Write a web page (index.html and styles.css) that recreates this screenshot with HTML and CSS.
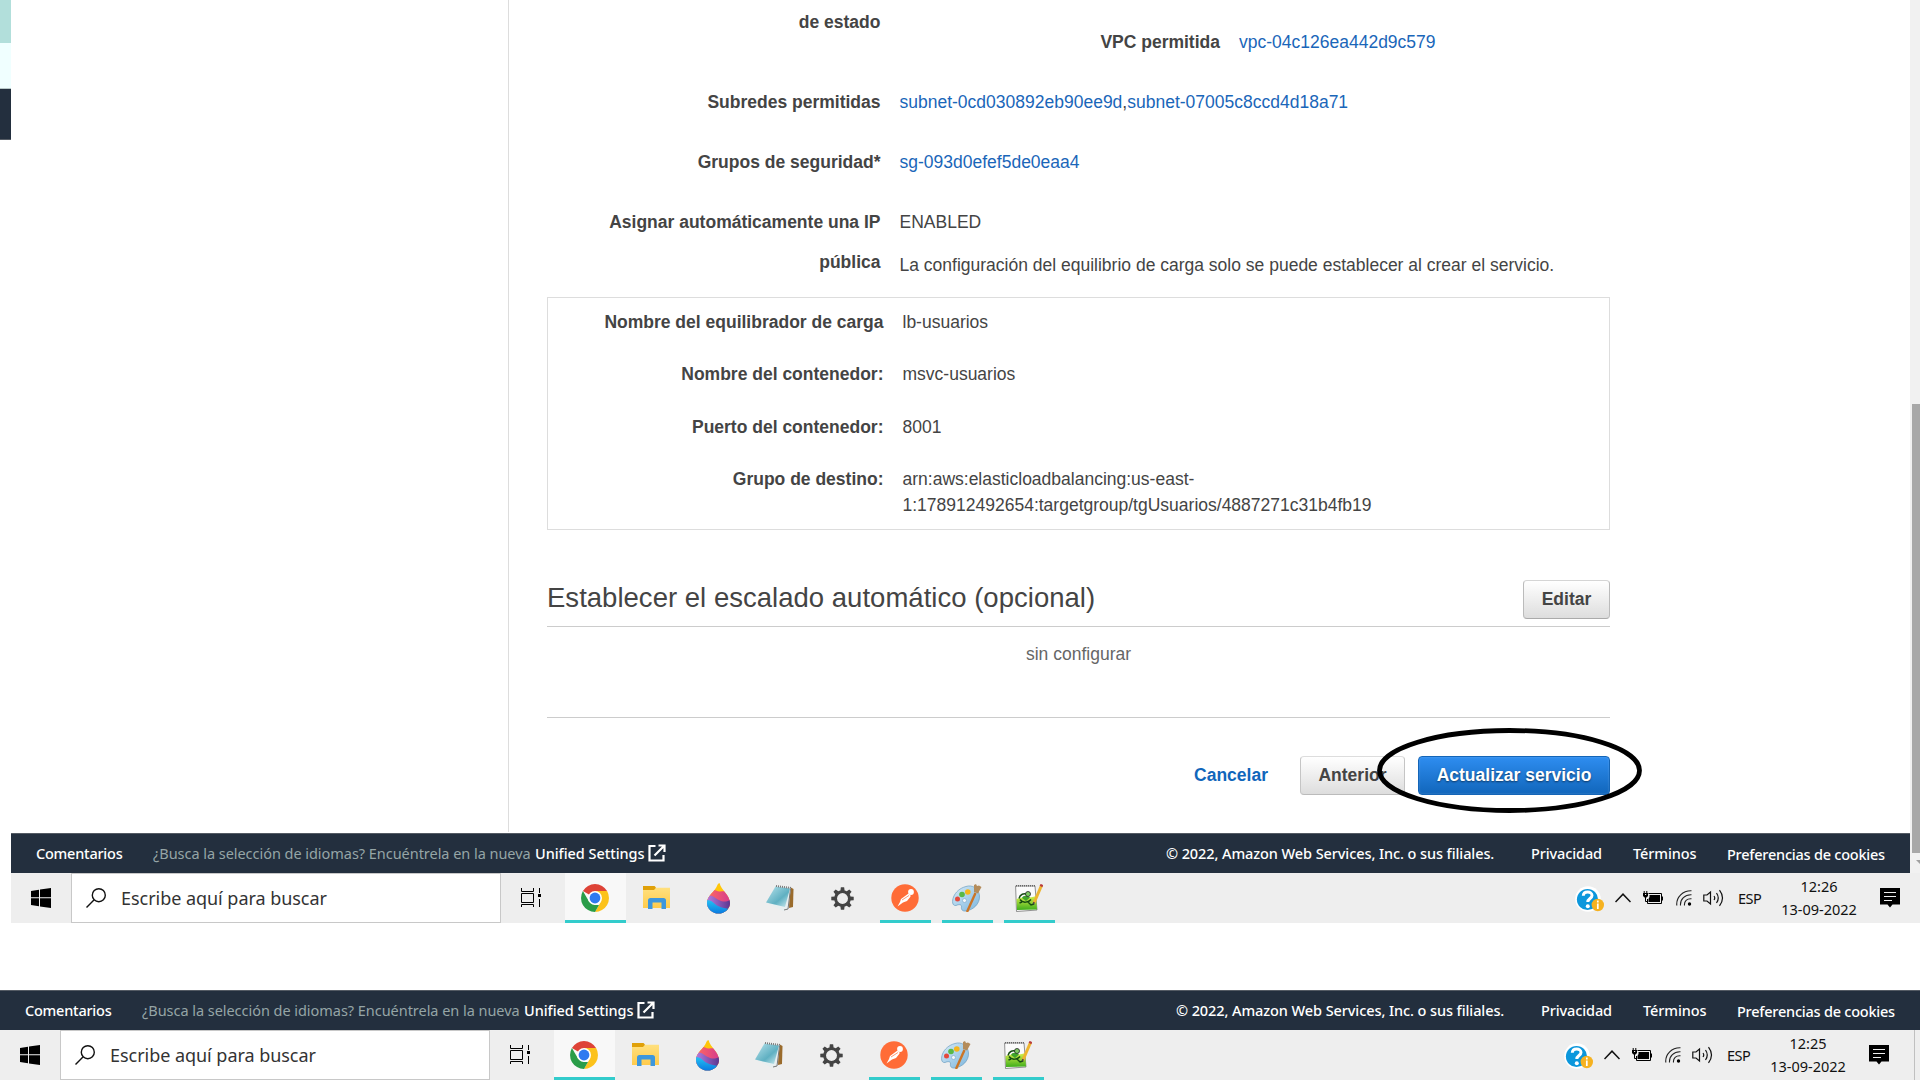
FILE: index.html
```
<!DOCTYPE html>
<html lang="es">
<head>
<meta charset="utf-8">
<title>Actualizar servicio</title>
<link rel="stylesheet" href="styles.css">
</head>
<body>
<svg class="defs" width="0" height="0">
  <defs>
    <linearGradient id="gDrop" x1="0" y1="0" x2="1" y2="0"><stop offset="0" stop-color="#ff6a5e"/><stop offset="1" stop-color="#d63b8e"/></linearGradient>
    <linearGradient id="gMid" x1="0" y1="0" x2="1" y2="0"><stop offset="0" stop-color="#b57be0"/><stop offset="1" stop-color="#5b3790"/></linearGradient>
    <linearGradient id="gLow" x1="0" y1="0" x2="0" y2="1"><stop offset="0" stop-color="#22c3f3"/><stop offset="1" stop-color="#0a78e0"/></linearGradient>
    <linearGradient id="gFold" x1="0" y1="0" x2="0" y2="1"><stop offset="0" stop-color="#ffe07e"/><stop offset="1" stop-color="#ffcb4c"/></linearGradient>
    <linearGradient id="gNote" x1="0" y1="0" x2="1" y2="1"><stop offset="0" stop-color="#b9e3ec"/><stop offset=".6" stop-color="#5fb0c2"/><stop offset="1" stop-color="#d5eef2"/></linearGradient>
    <linearGradient id="gPal" x1="0" y1="0" x2="1" y2="1"><stop offset="0" stop-color="#d6ebf8"/><stop offset="1" stop-color="#7db6dd"/></linearGradient>
    <linearGradient id="gNpp" x1="0" y1="0" x2="0" y2="1"><stop offset="0" stop-color="#d9f04a"/><stop offset="1" stop-color="#3fae1c"/></linearGradient>
    <clipPath id="dropClip"><path d="M12.500 0C14 7 23 12 23 20a11.500 10.500 0 0 1-23 0C0 13 7 9 9.500 4 10.500 1.500 11 .5 12.500 0z"/></clipPath>
  </defs>
  <symbol id="ext" viewBox="0 0 18 18"><path d="M7.500 2H1.500V16.500H15.500V11M10.500 1.500H16.500V8M16 2 6.500 11.500" fill="none" stroke="#fff" stroke-width="2.200"/></symbol>
  <symbol id="win" viewBox="0 0 20 20"><path d="M0 3 8 1.700V9.300H0zM9 1.500 20 0V9.300H9zM0 10.300H8V18.300L0 17zM9 10.300H20V20L9 18.500z"/></symbol>
  <symbol id="lens" viewBox="0 0 20 20"><g fill="none" stroke="#111" stroke-width="1.400"><circle cx="12.800" cy="7.200" r="6.500"/><path d="M8.200 11.800.5 19.500"/></g></symbol>
  <symbol id="task" viewBox="0 0 20 20"><g fill="none" stroke="#000" stroke-width="1"><path d="M.5 0V3.500H12.500V0M.5 5.500H12.500V14.500H.5zM.5 19V16.500H12.500V19M18.500 0V5M18.500 11V19"/></g><path d="M17 6h3v3h-3z"/></symbol>
  <symbol id="chrome" viewBox="0 0 28 28"><path d="M14 14 1.900 7A14 14 0 0 1 26.100 7z" fill="#de4337"/><path d="M14 14V7H26.100A14 14 0 0 1 14 28L20 17.500z" fill="#fcc21b"/><path d="M14 28A14 14 0 0 1 1.900 7L8 17.500 14 21H18z" fill="#2a9d49"/><circle cx="14" cy="14" r="7" fill="#fff"/><circle cx="14" cy="14" r="5.400" fill="#2f7af0"/></symbol>
  <symbol id="folder" viewBox="0 0 28 24"><path d="M0 0H11.500L13 1.500V4H0z" fill="#e0a008"/><path d="M0 4H11L13 1.800H27V22H0z" fill="url(#gFold)"/><path d="M5 23V14.500Q5 12 7.500 12H20.500Q23 12 23 14.500V23H18.500V16.500H9.500V23z" fill="#3d97dd"/></symbol>
  <symbol id="drop" viewBox="0 0 23 31"><g clip-path="url(#dropClip)"><path fill="#ffc60a" d="M0 0H23V31H0z"/><path fill="url(#gDrop)" d="M0 11C5 3 9 9 13 8.500S19 8 23 10V24H0z"/><path fill="url(#gMid)" d="M0 13C5 11 8 15 12 17S19 19 23 17V31H0z"/><path fill="url(#gLow)" d="M0 17C5 17 7 21 11 23S19 25 22 26V31H0z"/></g></symbol>
  <symbol id="note" viewBox="0 0 28 28"><path d="M24 3 27.500 5 27 23 23 24z" fill="#9a6b2c"/><path d="M9 2 25 4 22 25 17 27 1 19z" fill="#e8eff0"/><path d="M9.500 2.500 24 4.500 19 23 0 18.500z" fill="url(#gNote)"/><path d="M10 2 25 4" stroke="#777" stroke-width="2" stroke-dasharray="1 1"/><path d="M24.500 5 22 25 18 26" stroke="#777" stroke-width="1" fill="none"/></symbol>
  <symbol id="gear" viewBox="0 0 24 24"><g fill="#444"><path id="tooth" d="M9.800 4 10.300.3H13.700L14.200 4V20L13.700 23.700H10.300L9.800 20z"/><use href="#tooth" transform="rotate(45 12 12)"/><use href="#tooth" transform="rotate(90 12 12)"/><use href="#tooth" transform="rotate(135 12 12)"/><circle cx="12" cy="12" r="8.700"/></g><circle cx="12" cy="12" r="5.700" fill="#eee"/></symbol>
  <symbol id="postman" viewBox="0 0 28 28"><circle cx="14" cy="14" r="13.700" fill="#ff6c37"/><circle cx="20" cy="8" r="2.900" fill="#fff"/><path d="M17.500 9.500 10 15 9 18 6.500 22.500 12 18.500 16 17 20 12 18.500 10.500z" fill="#fff"/><path d="M11 16 18 11.500M20 12 20.500 15 18 17" stroke="#ff6c37" stroke-width=".7" fill="none"/></symbol>
  <symbol id="paint" viewBox="0 0 30 28"><path d="M14 2.500C20 .5 27 4 27.500 12 28 20 21 26 14 27 10 27.500 9 25 9.500 23 10 20.500 7 20 4 21.500 0 22 0 17 1.500 13 3.500 8 8 4 14 2.500z" fill="url(#gPal)" stroke="#6b9dc0" stroke-width=".7"/><circle cx="12.500" cy="16.500" r="2" fill="#f5f8fa" stroke="#79a5c4" stroke-width=".6"/><circle cx="5.500" cy="15" r="2.500" fill="#e4493c"/><circle cx="10" cy="10.500" r="2.800" fill="#58b946"/><circle cx="15.800" cy="8" r="2.800" fill="#f5b51c"/><path d="M15 28 23.500 9" stroke="#cb7527" stroke-width="2.400"/><path d="M22 8 26 9.500 29.500 3 27 1.500 25 2 24 0 22 1z" fill="#b48c5b"/></symbol>
  <symbol id="npp" viewBox="0 0 28 28"><path d="M.6 2H20L22 26 1.500 27.500z" fill="#fbfbfb" stroke="#777" stroke-width=".8"/><path d="M1 1.800H20" stroke="#666" stroke-width="1.500" stroke-dasharray="1 1"/><path d="M1.500 15C8 12 15 15 21 12L22 25.500 2 26z" fill="url(#gNpp)"/><path d="M4 14.500C5 10 9 9 12 10.500M5 15.500C8 20 14 18 16 15.500M7 18 4.500 19M13 18 16 21 19 20" fill="none" stroke="#164c12" stroke-width="1.400"/><path d="M7 14C8 11 12 11 15 13.500L11 17z" fill="#3fa32b"/><circle cx="13" cy="10" r="2.500" fill="#7dcb62" stroke="#222" stroke-width=".8"/><path d="M19 19 26.500 1.500" stroke="#eeb52f" stroke-width="3"/><path d="M26 2.500 27 .5" stroke="#b93d3d" stroke-width="3"/><path d="M18.500 20.500 19 18" stroke="#444" stroke-width="1.500"/></symbol>
  <symbol id="help" viewBox="0 0 30 28"><circle cx="13" cy="13" r="12.800" fill="#fff"/><circle cx="12.500" cy="13.500" r="10.600" fill="#0c97dc"/><path d="M8.300 9.800C8.500 4.800 17 4.800 17 9.500 17 12.500 12.800 12.500 12.800 16" fill="none" stroke="#fff" stroke-width="3"/><circle cx="12.800" cy="20.200" r="2" fill="#fff"/><circle cx="22.800" cy="19" r="6.200" fill="#f6b220"/><path d="M22.800 17.500v5.500M22.800 14.500v2" stroke="#fff" stroke-width="1.700"/></symbol>
  <symbol id="caret" viewBox="0 0 16 10"><path d="M.5 9 8 1.200 15.500 9" fill="none" stroke="#111" stroke-width="1.500"/></symbol>
  <symbol id="batt" viewBox="0 0 20 14"><path d="M5.500 2.500H18.500V12.500H4.500V8" fill="none" stroke="#000"/><path d="M6.500 4H17V11H5.500V8L6.500 6zM18.500 5.500H20V9.500H18.500zM0 2H5V5L3.500 6.500H1.500L0 5z"/><path d="M1.200 0V2.500M3.800 0V2.500M2.500 6V10.500H4.500" stroke="#000" fill="none"/><path d="M2 3.500H3.200" stroke="#eee"/></symbol>
  <symbol id="wifi" viewBox="0 0 16 16"><g fill="none" stroke="#222" stroke-width="1.100"><path d="M.8 15.500C0 7 7 .5 15.500.8M4.500 15.500C4 9 9 4.500 15.500 4.800M8.500 15.500C8 11 11 8.500 15.500 8.800"/></g><circle cx="13.500" cy="14" r="1.700"/></symbol>
  <symbol id="sound" viewBox="0 0 21 18"><g fill="none" stroke="#111" stroke-width="1.200"><path d="M.8 6H4L7.500 3V15L4 12H.8zM11 7Q12.500 9 11 11M13.500 4Q17 9 13.500 14M16.500 1.200Q22.500 9 16.500 16.800"/></g></symbol>
  <symbol id="notif" viewBox="0 0 20 20"><path d="M0 0H20V16.500H12.500L10 19.500 7.500 16.500H0z"/><path d="M4 4.500H16M4 8.500H16M4 12.500H12" stroke="#eee" stroke-width="1"/></symbol>
</svg>

<div class="page">
  <div class="edge"><i class="edge-teal"></i><i class="edge-mint"></i><i class="edge-navy"></i></div>
  <main class="console">
    <div class="row row-vpc">
      <div class="label">de estado</div>
      <div class="value vpc"><span class="label vpc-label">VPC permitida</span><a class="link">vpc-04c126ea442d9c579</a></div>
    </div>
    <div class="row"><div class="label">Subredes permitidas</div><div class="value"><a class="link">subnet-0cd030892eb90ee9d</a>,<a class="link">subnet-07005c8ccd4d18a71</a></div></div>
    <div class="row"><div class="label">Grupos de seguridad*</div><div class="value"><a class="link">sg-093d0efef5de0eaa4</a></div></div>
    <div class="row row-ip"><div class="label">Asignar automáticamente una IP pública</div><div class="value"><div>ENABLED</div><div class="hint">La configuración del equilibrio de carga solo se puede establecer al crear el servicio.</div></div></div>

    <section class="balancer">
      <div class="brow"><div class="label">Nombre del equilibrador de carga</div><div>lb-usuarios</div></div>
      <div class="brow"><div class="label">Nombre del contenedor:</div><div>msvc-usuarios</div></div>
      <div class="brow"><div class="label">Puerto del contenedor:</div><div>8001</div></div>
      <div class="brow"><div class="label">Grupo de destino:</div><div>arn:aws:elasticloadbalancing:us-east-<br>1:178912492654:targetgroup/tgUsuarios/4887271c31b4fb19</div></div>
    </section>

    <header class="scaling"><h2>Establecer el escalado automático (opcional)</h2><button class="btn">Editar</button></header>
    <p class="empty">sin configurar</p>
    <div class="actions">
      <a class="cancel">Cancelar</a>
      <button class="btn btn-prev">Anterior</button>
      <button class="btn btn-primary">Actualizar servicio</button>
      <svg class="mark" width="267" height="87" viewBox="0 0 267 87"><ellipse cx="133.500" cy="43.500" rx="130" ry="40" fill="none" stroke="#000" stroke-width="4.800"/></svg>
    </div>
  </main>
  <div class="scroll"><i class="thumb"></i><i class="arrow"></i></div>
</div>

<div class="foot foot-a">
  <b class="f-com">Comentarios</b><span class="f-lang">¿Busca la selección de idiomas? Encuéntrela en la nueva</span><b class="f-uni">Unified Settings</b><svg width="18" height="18"><use href="#ext"/></svg>
  <b class="f-copy">© 2022, Amazon Web Services, Inc. o sus filiales.</b><b class="f-priv">Privacidad</b><b class="f-term">Términos</b><b class="f-cook">Preferencias de cookies</b>
</div>
<div class="bar bar-a">
  <div class="start"><svg width="20" height="20"><use href="#win"/></svg></div>
  <div class="search"><svg width="20" height="20"><use href="#lens"/></svg><span>Escribe aquí para buscar</span></div>
  <div class="tview"><svg width="20" height="20"><use href="#task"/></svg></div>
  <div class="app active"><svg width="28" height="28"><use href="#chrome"/></svg></div>
  <div class="app"><svg width="28" height="24"><use href="#folder"/></svg></div>
  <div class="app nudge"><svg width="23" height="31"><use href="#drop"/></svg></div>
  <div class="app nudge"><svg width="28" height="28"><use href="#note"/></svg></div>
  <div class="app nudge"><svg width="23" height="23"><use href="#gear"/></svg></div>
  <div class="app open"><svg width="28" height="28"><use href="#postman"/></svg></div>
  <div class="app open"><svg width="30" height="28"><use href="#paint"/></svg></div>
  <div class="app open"><svg width="28" height="28"><use href="#npp"/></svg></div>
  <div class="tray">
    <svg class="t-help" width="30" height="28"><use href="#help"/></svg><svg class="t-caret" width="16" height="10"><use href="#caret"/></svg><svg class="t-batt" width="20" height="14"><use href="#batt"/></svg><svg class="t-wifi" width="16" height="16"><use href="#wifi"/></svg><svg class="t-sound" width="21" height="18"><use href="#sound"/></svg><span class="esp">ESP</span>
    <div class="clock"><span class="time">12:26</span><span class="date">13-09-2022</span></div>
    <svg class="t-notif" width="20" height="20"><use href="#notif"/></svg>
  </div>
</div>

<div class="foot foot-b">
  <b class="f-com">Comentarios</b><span class="f-lang">¿Busca la selección de idiomas? Encuéntrela en la nueva</span><b class="f-uni">Unified Settings</b><svg width="18" height="18"><use href="#ext"/></svg>
  <b class="f-copy">© 2022, Amazon Web Services, Inc. o sus filiales.</b><b class="f-priv">Privacidad</b><b class="f-term">Términos</b><b class="f-cook">Preferencias de cookies</b>
</div>
<div class="bar bar-b">
  <div class="start"><svg width="20" height="20"><use href="#win"/></svg></div>
  <div class="search"><svg width="20" height="20"><use href="#lens"/></svg><span>Escribe aquí para buscar</span></div>
  <div class="tview"><svg width="20" height="20"><use href="#task"/></svg></div>
  <div class="app active"><svg width="28" height="28"><use href="#chrome"/></svg></div>
  <div class="app"><svg width="28" height="24"><use href="#folder"/></svg></div>
  <div class="app nudge"><svg width="23" height="31"><use href="#drop"/></svg></div>
  <div class="app nudge"><svg width="28" height="28"><use href="#note"/></svg></div>
  <div class="app nudge"><svg width="23" height="23"><use href="#gear"/></svg></div>
  <div class="app open"><svg width="28" height="28"><use href="#postman"/></svg></div>
  <div class="app open"><svg width="30" height="28"><use href="#paint"/></svg></div>
  <div class="app open"><svg width="28" height="28"><use href="#npp"/></svg></div>
  <div class="tray">
    <svg class="t-help" width="30" height="28"><use href="#help"/></svg><svg class="t-caret" width="16" height="10"><use href="#caret"/></svg><svg class="t-batt" width="20" height="14"><use href="#batt"/></svg><svg class="t-wifi" width="16" height="16"><use href="#wifi"/></svg><svg class="t-sound" width="21" height="18"><use href="#sound"/></svg><span class="esp">ESP</span>
    <div class="clock"><span class="time">12:25</span><span class="date">13-09-2022</span></div>
    <svg class="t-notif" width="20" height="20"><use href="#notif"/></svg><i class="peek"></i>
  </div>
</div>
</body>
</html>
```
FILE: styles.css
```
* { box-sizing: border-box; }
body { margin: 0; width: 1920px; height: 1080px; overflow: hidden; background: #fff; color: #444; font: 17.5px/26px "Liberation Sans", Arial, sans-serif; }
svg { display: block; flex: none; }
.defs { position: absolute; }

.page { display: flex; height: 833px; }
.edge { width: 508px; }
.edge i { display: block; width: 11px; }
.edge-teal { height: 43px; background: #b2dfdb; }
.edge-mint { height: 46px; background: #f0ffff; border-bottom: 1px solid #b9c9c9; }
.edge-navy { height: 51px; background: #232f3e; border-bottom: 1px solid #545b64; }
.console { width: 1102px; height: 832px; border-left: 1px solid #ddd; padding: 2px 0 0 38px; }
.label { font-weight: bold; text-align: right; }
.link { color: #1a66b9; }
.row { display: grid; grid-template-columns: 333.5px 1fr; column-gap: 19px; height: 60px; line-height: 40px; white-space: nowrap; }
.row-vpc { height: 80px; }
.row-ip { height: 80px; }
.row-ip .label { white-space: normal; padding-left: 50px; }
.vpc { display: flex; padding-top: 20px; gap: 19px; }
.vpc-label { width: 320.5px; }
.hint { margin-top: 3px; }
.balancer { margin-top: 15px; height: 233px; border: 1px solid #ddd; padding-top: 11px; display: flex; flex-direction: column; gap: 26.4px; }
.brow { display: grid; grid-template-columns: 335.5px 1fr; column-gap: 19px; }
.scaling { margin-top: 50px; height: 47px; border-bottom: 1px solid #ccc; display: flex; justify-content: space-between; align-items: flex-start; }
h2 { margin: 0; font-size: 27.5px; line-height: 35px; font-weight: normal; letter-spacing: .02px; }
.btn { height: 39px; width: 87px; padding: 0; border: 1px solid; border-color: #d5d5d5 #bbb #aaa; border-radius: 4px; background: linear-gradient(#fff, #ddd); color: #444; font: bold 17.5px "Liberation Sans", Arial, sans-serif; }
.empty { margin: 14px 0 50px; color: #666; text-align: center; line-height: 26px; }
.actions { position: relative; border-top: 1px solid #ccc; padding-top: 38px; display: flex; justify-content: flex-end; align-items: center; }
.cancel { color: #1166bb; font-weight: bold; margin-right: 32px; padding-bottom: 2px; }
.btn-prev { width: 105px; margin-right: 13px; border-color: #ddd #c5c5c5 #bbb; }
.btn-primary { width: 192px; color: #fff; border-color: #1465b7; background: linear-gradient(#2e8df0, #1166bb); text-shadow: 0 1px 2px #0008; box-shadow: inset 0 0 2px #ffffff40; }
.mark { position: absolute; right: -33px; top: 9px; }
.scroll { margin-left: auto; width: 10px; height: 873px; padding-top: 404px; background: #f1f1f1; }
.thumb { display: block; height: 449px; margin-left: 2px; background: #a8a8a8; }
.arrow { display: block; margin: 7px 0 0 6px; border-top: 4px solid #a0a0a0; border-left: 4px solid transparent; }

.foot { display: flex; align-items: center; height: 40px; background: #232f3e; border-top: 1px solid #545b64; color: #fff; padding: 0 25px 1px; font: 14.5px/24px "Noto Sans", sans-serif; white-space: nowrap; }
.foot b { font-weight: 500; }
.foot-a { width: 1899px; margin-left: 11px; }
.foot-b { margin-top: 67px; }
.f-com { margin-right: 31px; width: 86px; letter-spacing: -.23px; }
.foot .f-lang { color: #95a5a6; width: 382px; letter-spacing: -.04px; }
.f-uni { width: 113px; letter-spacing: -.05px; }
.f-copy { margin-left: auto; width: 327px; letter-spacing: -.09px; }
.f-priv { margin-left: 38px; width: 71px; letter-spacing: -.12px; }
.f-term { margin-left: 31px; width: 63px; letter-spacing: -.1px; }
.f-cook { margin-left: 31px; width: 158px; padding-top: 2px; letter-spacing: -.23px; }

.bar { display: flex; height: 50px; background: #eee; }
.bar-a { margin-left: 11px; }
.start { width: 60px; padding: 15px 0 0 20px; }
.search { width: 430px; border: 1px solid #c8c8c8; background: #fff; display: flex; align-items: center; padding: 0 0 0 14px; gap: 15px; font: 18px/24px "Noto Sans", sans-serif; letter-spacing: -.04px; color: #333; white-space: nowrap; }
.tview { width: 64px; padding: 15px 0 0 20px; }
.app { width: 62px; height: 50px; display: flex; align-items: center; justify-content: center; position: relative; }
.active { width: 61px; background: #f8f8f8; padding-right: 2px; }
.nudge { padding-right: 2px; }
.active::after, .open::after { content: ""; position: absolute; left: 6px; right: 5px; bottom: 0; height: 3px; background: #3cc; }
.active::after { left: 0; right: 0; }
.tray { flex: none; padding-left: 515px; display: flex; align-items: center; color: #111; font: 14.5px/23px "Noto Sans", sans-serif; }
.t-help { margin: 4px 10px 0 0; }
.t-caret { margin-right: 12px; }
.t-batt { margin-right: 13px; }
.t-wifi { margin-right: 11px; }
.t-sound { margin-right: 14px; }
.esp { width: 24px; letter-spacing: -.5px; }
.clock { margin-left: 15px; width: 84px; display: flex; flex-direction: column; align-items: center; white-space: nowrap; }
.t-notif { margin-left: 19px; }
.peek { margin-left: 25px; width: 1px; height: 50px; background: #c0c0c0; }
```
